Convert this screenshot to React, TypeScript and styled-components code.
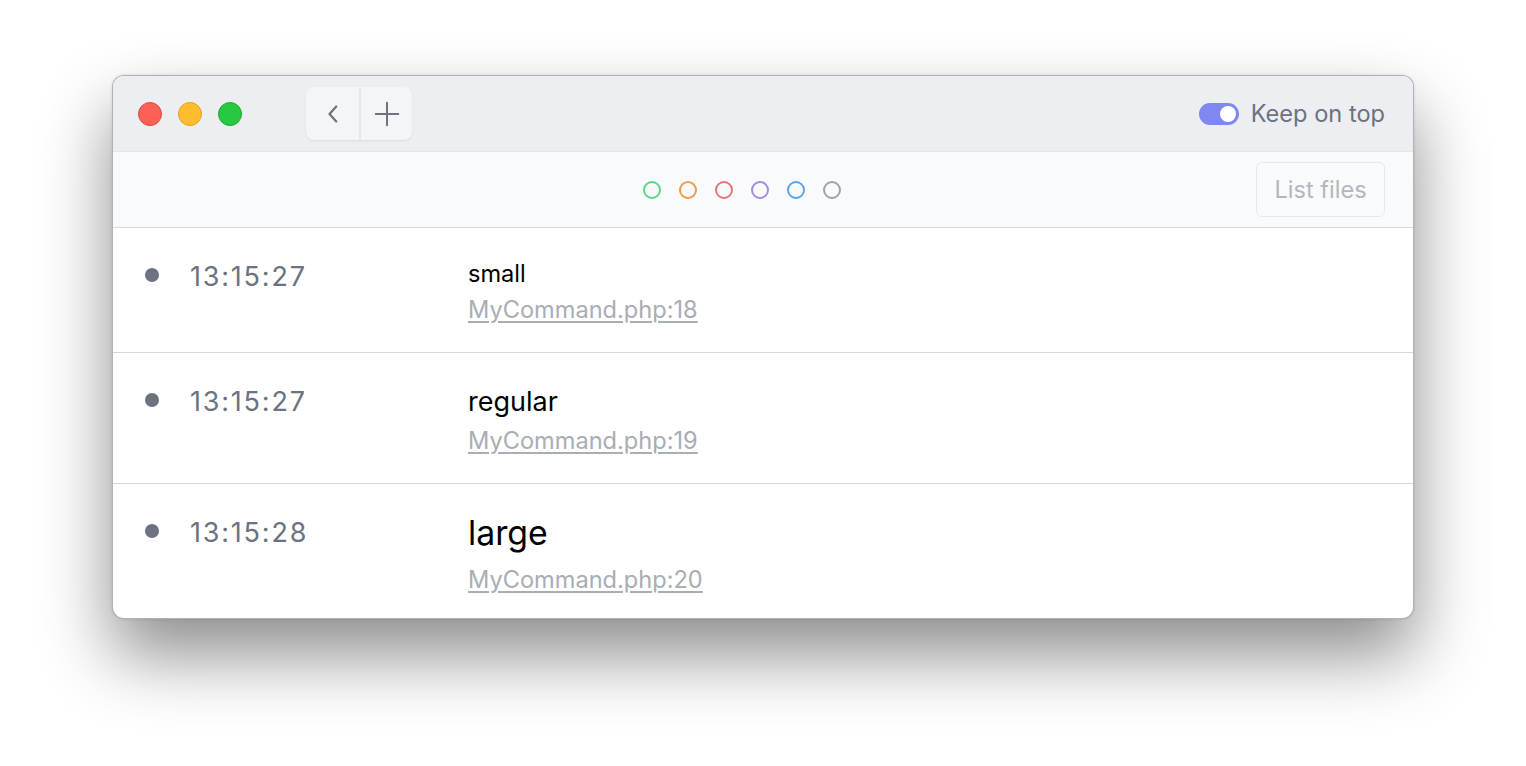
import React from "react";
import styled, { createGlobalStyle } from "styled-components";

const Global = createGlobalStyle`
  * { box-sizing: border-box; }
  html, body { margin: 0; padding: 0; background: #ffffff; }
  body { font-family: Inter, "Noto Sans", "Liberation Sans", sans-serif; -webkit-font-smoothing: antialiased; }
`;

const Page = styled.div`
  width: 1526px;
  height: 766px;
  display: flex;
  justify-content: center;
  align-items: flex-start;
  padding-top: 75px;
  overflow: hidden;
`;

const Window = styled.div`
  width: 1302px;
  border-radius: 12px;
  border: 1px solid rgba(0, 0, 0, 0.3);
  background: #ffffff;
  overflow: hidden;
  box-shadow: 0 36px 70px rgba(0, 0, 0, 0.45), 0 0 3px rgba(0, 0, 0, 0.12);
`;

const TitleBar = styled.div`
  height: 76px;
  background: #edeef1;
  border-bottom: 1px solid #e4e5e9;
  display: flex;
  align-items: center;
  padding: 0 28px 0 25px;
`;

const Lights = styled.div`
  display: flex;
  gap: 16px;
`;

const Light = styled.span<{ $c: string; $b: string }>`
  width: 24px;
  height: 24px;
  border-radius: 50%;
  background: ${(p) => p.$c};
  border: 1px solid ${(p) => p.$b};
`;

const NavGroup = styled.div`
  margin-left: 64px;
  display: flex;
  height: 53px;
  border-radius: 8px;
  background: #f4f5f7;
  box-shadow: 0 1px 2px rgba(0, 0, 0, 0.08);
  overflow: hidden;
`;

const NavButton = styled.button<{ $divider?: boolean }>`
  width: 53px;
  height: 53px;
  border: none;
  background: transparent;
  display: flex;
  align-items: center;
  justify-content: center;
  padding: 0;
  color: #6b7280;
  border-left: ${(p) => (p.$divider ? "2px solid #e6e7ea" : "none")};
`;

const KeepOnTop = styled.label`
  margin-left: auto;
  display: flex;
  align-items: center;
  gap: 12px;
  font-size: 23.6px;
  color: #6b7280;
`;

const Toggle = styled.span`
  width: 40px;
  height: 22px;
  border-radius: 11px;
  background: #7f88ef;
  display: flex;
  align-items: center;
  justify-content: flex-end;
  padding: 3px;
`;

const Knob = styled.span`
  width: 16px;
  height: 16px;
  border-radius: 50%;
  background: #ffffff;
`;

const Toolbar = styled.div`
  height: 76px;
  background: #f9fafb;
  border-bottom: 1.5px solid #d8dadd;
  display: flex;
  align-items: center;
  padding: 0 28px;
`;

const Circles = styled.div`
  margin-left: 502px;
  display: flex;
  gap: 18px;
`;

const Circle = styled.span<{ $c: string }>`
  width: 18px;
  height: 18px;
  border-radius: 50%;
  border: 2px solid ${(p) => p.$c};
`;

const ListButton = styled.button`
  margin-left: auto;
  width: 129px;
  height: 55px;
  border: 1.5px solid #e7e8eb;
  border-radius: 6px;
  background: #f9fafb;
  color: #b3b7be;
  font-family: inherit;
  font-size: 23.6px;
  padding: 0;
`;

const Row = styled.div<{ $last?: boolean }>`
  display: flex;
  align-items: flex-start;
  padding: 29px 32px ${(p) => (p.$last ? "21px" : "25px")} 32px;
  border-bottom: ${(p) => (p.$last ? "none" : "1.5px solid #d4d6da")};
`;

const Dot = styled.span`
  width: 14px;
  height: 14px;
  border-radius: 50%;
  background: #6b7280;
  margin-top: 11px;
  flex: none;
`;

const Time = styled.div`
  margin-left: 31px;
  width: 278px;
  flex: none;
  font-size: 27px;
  line-height: 40px;
  color: #6b7280;
  letter-spacing: 1.8px;
`;

const Body = styled.div`
  display: flex;
  flex-direction: column;
`;

const Message = styled.div<{ $size: number; $lh: number; $gap: number }>`
  font-size: ${(p) => p.$size}px;
  line-height: ${(p) => p.$lh}px;
  margin-bottom: ${(p) => p.$gap}px;
  color: #000000;
`;

const FileLink = styled.a`
  font-size: 23.6px;
  line-height: 34px;
  color: #a9adb4;
  text-decoration: underline;
  text-underline-offset: 3px;
`;

const entries = [
  { time: "13:15:27", msg: "small", size: 23.6, lh: 34, gap: 2, file: "MyCommand.php:18" },
  { time: "13:15:27", msg: "regular", size: 27, lh: 40, gap: 2, file: "MyCommand.php:19" },
  { time: "13:15:28", msg: "large", size: 33.8, lh: 40, gap: 10, file: "MyCommand.php:20" },
];

const colors = ["#5fd38a", "#ef9a4f", "#e3757a", "#a48be6", "#5fa0ea", "#a1a3a8"];

export default function App() {
  return (
    <>
      <Global />
      <Page>
        <Window>
          <TitleBar>
            <Lights>
              <Light $c="#fe5f57" $b="#e2463f" />
              <Light $c="#febc2e" $b="#e1a116" />
              <Light $c="#28c840" $b="#14ae2a" />
            </Lights>
            <NavGroup>
              <NavButton aria-label="Back">
                <svg width="28" height="28" viewBox="0 0 24 24" fill="none" stroke="currentColor" strokeWidth="1.9" strokeLinecap="round" strokeLinejoin="round">
                  <path d="M14.8 5.6 L9 12 L14.8 18.4" />
                </svg>
              </NavButton>
              <NavButton $divider aria-label="New">
                <svg width="30" height="30" viewBox="0 0 24 24" fill="none" stroke="currentColor" strokeWidth="1.6" strokeLinecap="round">
                  <path d="M12 3 V21 M3 12 H21" />
                </svg>
              </NavButton>
            </NavGroup>
            <KeepOnTop>
              <Toggle>
                <Knob />
              </Toggle>
              Keep on top
            </KeepOnTop>
          </TitleBar>
          <Toolbar>
            <Circles>
              {colors.map((c) => (
                <Circle key={c} $c={c} />
              ))}
            </Circles>
            <ListButton>List files</ListButton>
          </Toolbar>
          {entries.map((e, i) => (
            <Row key={i} $last={i === entries.length - 1}>
              <Dot />
              <Time>{e.time}</Time>
              <Body>
                <Message $size={e.size} $lh={e.lh} $gap={e.gap}>
                  {e.msg}
                </Message>
                <FileLink>{e.file}</FileLink>
              </Body>
            </Row>
          ))}
        </Window>
      </Page>
    </>
  );
}
